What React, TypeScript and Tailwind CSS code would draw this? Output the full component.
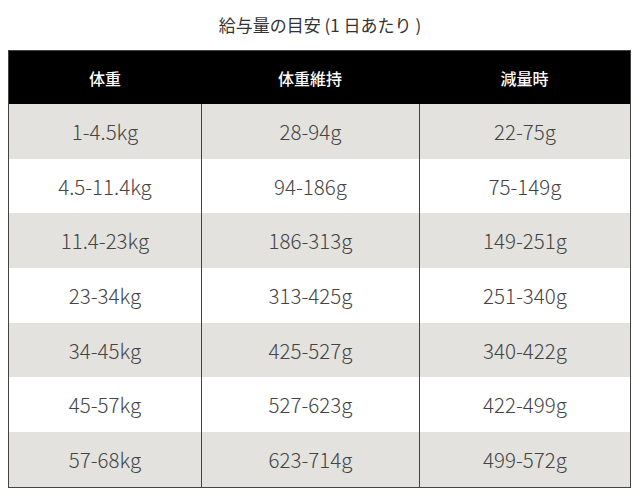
const rows: [string, string, string][] = [
  ['1-4.5kg', '28-94g', '22-75g'],
  ['4.5-11.4kg', '94-186g', '75-149g'],
  ['11.4-23kg', '186-313g', '149-251g'],
  ['23-34kg', '313-425g', '251-340g'],
  ['34-45kg', '425-527g', '340-422g'],
  ['45-57kg', '527-623g', '422-499g'],
  ['57-68kg', '623-714g', '499-572g'],
];

const font = { fontFamily: '"Noto Sans CJK JP", "Noto Sans", sans-serif' };

export default function App() {
  return (
    <div className="w-[640px] h-[504px] bg-white" style={font}>
      <h1 className="pt-[12px] h-[50px] text-center text-[17px] text-[#333]">給与量の目安 (1 日あたり )</h1>
      <div className="ml-[8px] w-[623px] border border-[#444]">
        <div className="grid grid-cols-[192px_218px_211px] h-[53px] bg-black text-white text-[16px] font-medium">
          <div className="flex items-center justify-center">体重</div>
          <div className="flex items-center justify-center">体重維持</div>
          <div className="flex items-center justify-center">減量時</div>
        </div>
        {rows.map((r, i) => (
          <div
            key={i}
            className={`grid grid-cols-[192px_218px_211px] h-[54.7px] text-[20.5px] font-light text-[#444] ${i % 2 === 0 ? 'bg-[#e3e2df]' : 'bg-white'}`}
          >
            <div className="flex items-center justify-center">{r[0]}</div>
            <div className="flex items-center justify-center border-l border-[#444]">{r[1]}</div>
            <div className="flex items-center justify-center border-l border-[#444]">{r[2]}</div>
          </div>
        ))}
      </div>
    </div>
  );
}
